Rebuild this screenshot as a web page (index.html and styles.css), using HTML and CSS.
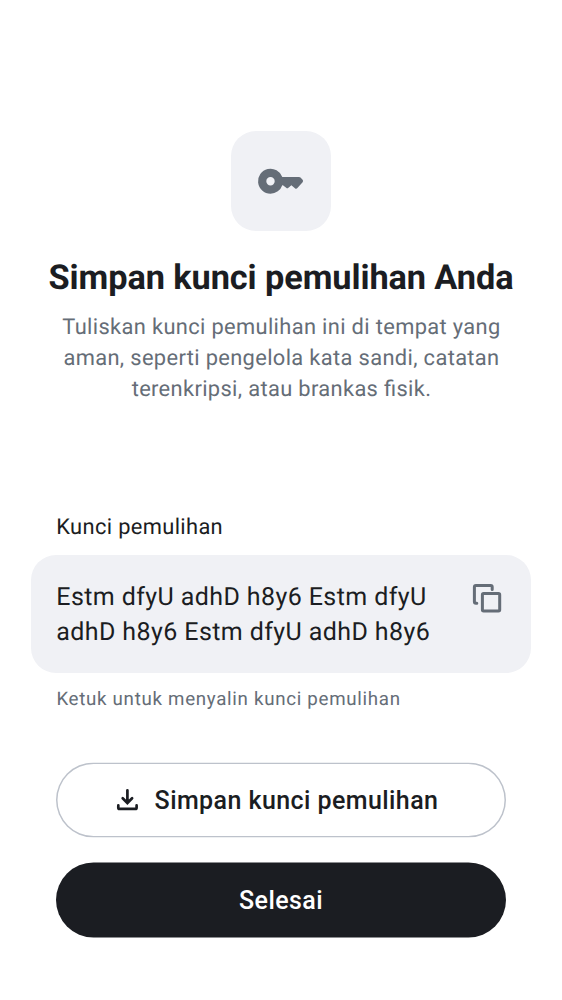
FILE: index.html
```html
<!DOCTYPE html>
<html lang="id">
<head>
<meta charset="utf-8">
<title>Simpan kunci pemulihan Anda</title>
<link rel="stylesheet" href="styles.css">
</head>
<body>
<main class="screen">
  <header class="header">
    <div class="badge">
      <svg class="key-icon" viewBox="0 0 50 50" aria-hidden="true"><path fill-rule="evenodd" d="M14.5 37.7a12.5 12.5 0 1 1 11.8-16.7H43q.9 0 1.5.6l2.1 2.1q1 1.3 0 2.6l-5.2 5.8q-1.2 1.2-2.5.1L35.4 29.2l-3 2.6q-1.1 1-2.2 0l-3.3-2.6h-.6A12.5 12.5 0 0 1 14.5 37.7Zm0-8.3a4.2 4.2 0 1 0 0-8.4 4.2 4.2 0 0 0 0 8.4Z"/></svg>
    </div>
    <h1 class="title">Simpan kunci pemulihan Anda</h1>
    <p class="subtitle">Tuliskan kunci pemulihan ini di tempat yang<br>aman, seperti pengelola kata sandi, catatan<br>terenkripsi, atau brankas fisik.</p>
  </header>
  <section class="recovery">
    <div class="label">Kunci pemulihan</div>
    <div class="key-box">
      <div class="key-text">Estm dfyU adhD h8y6 Estm dfyU<br>adhD h8y6 Estm dfyU adhD h8y6</div>
      <svg class="copy-icon" viewBox="0 0 30 30" aria-hidden="true"><path d="M4.8 20.3H3.9a1.5 1.5 0 0 1-1.5-1.5V4.1a1.5 1.5 0 0 1 1.5-1.5h14.8a1.5 1.5 0 0 1 1.5 1.5v2.4"/><rect x="10.4" y="10.6" width="17.3" height="17.3" rx="1.2"/></svg>
    </div>
    <div class="hint">Ketuk untuk menyalin kunci pemulihan</div>
  </section>
  <div class="actions">
    <button class="button outline">
      <svg class="download-icon" viewBox="0 0 25 25" aria-hidden="true"><path d="M12.4 2.8v12M7.7 10.8l4.7 4.7 4.7-4.7M3.3 17.9v2.3q0 1.2 1.2 1.2h15.9q1.2 0 1.2-1.2v-2.3"/></svg>
      <span>Simpan kunci pemulihan</span>
    </button>
    <button class="button solid">Selesai</button>
  </div>
</main>
</body>
</html>
```
FILE: styles.css
```css
* { box-sizing: border-box; }
body { margin: 0; background: #fff; color: #1b1d22; font-family: Roboto, sans-serif; text-rendering: geometricPrecision; }
.screen { width: 562px; height: 1000px; padding-top: 131px; display: flex; flex-direction: column; }
.header { display: flex; flex-direction: column; align-items: center; text-align: center; }
.badge { width: 100px; height: 100px; border-radius: 25px; background: #f0f1f5; display: flex; align-items: center; justify-content: center; }
.key-icon { width: 50px; height: 50px; fill: #656d77; }
.title { margin: 26px 0 0; font: 700 34.34px/42px Roboto, sans-serif; letter-spacing: -.1px; white-space: nowrap; }
.subtitle { margin: 13px 0 0 1px; font: 400 21.86px/31.22px Roboto, sans-serif; letter-spacing: .35px; font-feature-settings: "liga" 1; color: #656d77; white-space: nowrap; }
.recovery { margin: 106px 31px 0; }
.label { padding-left: 25.3px; font-size: 21.86px; line-height: 31px; letter-spacing: .35px; }
.key-box { margin-top: 12px; height: 118px; padding: 25px 29px 0 25.3px; border-radius: 25px; background: #f0f1f5; display: flex; justify-content: space-between; }
.key-text { font-size: 25px; line-height: 35px; letter-spacing: .4px; white-space: nowrap; }
.copy-icon { width: 30px; height: 30px; margin-top: 3px; fill: none; stroke: #656d77; stroke-width: 3; stroke-linecap: round; }
.hint { margin: 14px 0 0 25.4px; font-size: 18.73px; line-height: 25px; letter-spacing: .7px; color: #656d77; }
.actions { margin: 50px 56px 0; display: flex; flex-direction: column; gap: 25px; transform: translateY(.5px); }
.button { height: 75px; border: 0; padding: 0; border-radius: 38px; display: flex; align-items: center; justify-content: center; gap: 15px; font: 500 25px/31px Roboto, sans-serif; letter-spacing: .42px; }
.outline { padding-right: 9px; background: #fff; color: #1b1d22; box-shadow: inset 0 0 0 1.5px #bdc2cb; }
.solid { background: #1b1d22; color: #fff; }
.download-icon { width: 25px; height: 25px; fill: none; stroke: currentColor; stroke-width: 2.7; stroke-linecap: round; }
```
